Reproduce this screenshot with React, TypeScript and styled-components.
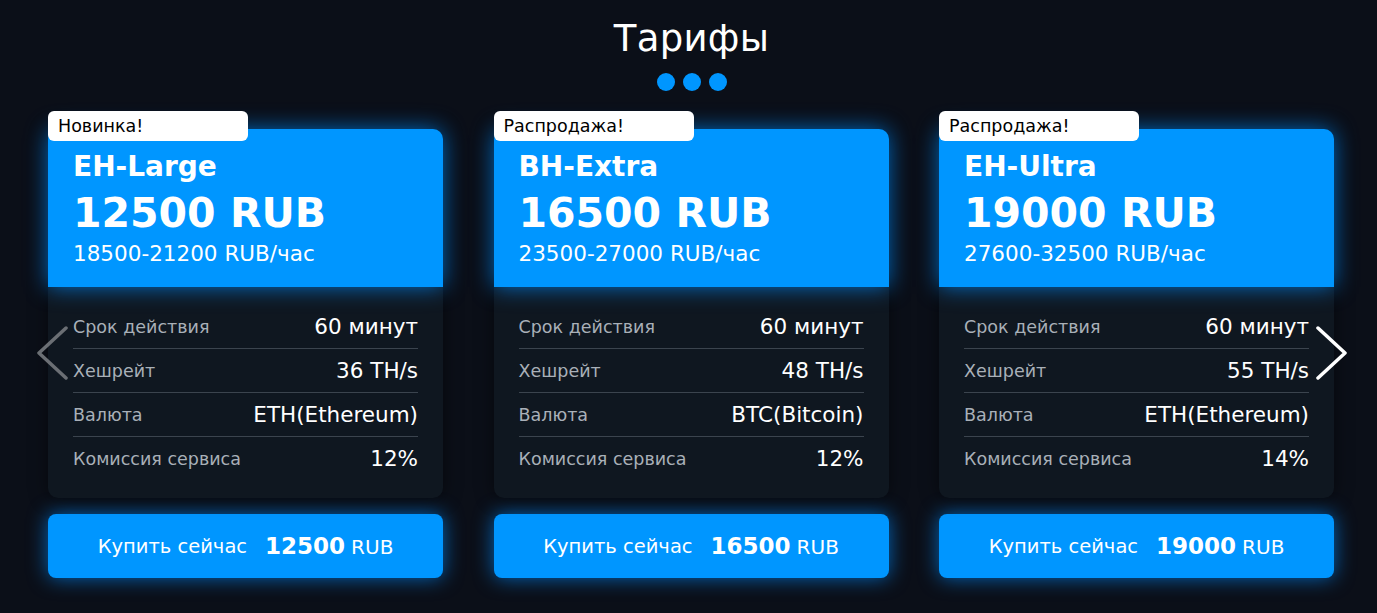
import React from "react";
import styled, { createGlobalStyle } from "styled-components";

const FONT = `"DejaVu Sans", "Noto Sans", sans-serif`;

const GlobalStyle = createGlobalStyle`
    html, body {
        margin: 0;
        padding: 0;
        background: #0b0f18;
    }
    body {
        font-family: ${FONT};
        color: #fff;
    }
`;

type Plan = {
    badge: string;
    name: string;
    price: string;
    range: string;
    hashrate: string;
    currency: string;
    fee: string;
};

const plans: Plan[] = [
    { badge: "Новинка!", name: "EH-Large", price: "12500", range: "18500-21200 RUB/час", hashrate: "36 TH/s", currency: "ETH(Ethereum)", fee: "12%" },
    { badge: "Распродажа!", name: "BH-Extra", price: "16500", range: "23500-27000 RUB/час", hashrate: "48 TH/s", currency: "BTC(Bitcoin)", fee: "12%" },
    { badge: "Распродажа!", name: "EH-Ultra", price: "19000", range: "27600-32500 RUB/час", hashrate: "55 TH/s", currency: "ETH(Ethereum)", fee: "14%" },
];

const Page = styled.div`
    width: 1377px;
    height: 613px;
    background: #0b0f18;
    display: flex;
    flex-direction: column;
    align-items: center;
    overflow: hidden;
`;

const Title = styled.h2`
    margin: 16px 0 0 6px;
    font-size: 37px;
    font-weight: 500;
    line-height: 46px;
    letter-spacing: 0.3px;
`;

const Dots = styled.div`
    display: flex;
    gap: 8px;
    margin: 11px 0 0 6px;
`;

const Dot = styled.span`
    width: 18px;
    height: 18px;
    border-radius: 50%;
    background: #0096ff;
`;

const Slider = styled.div`
    position: relative;
    width: 100%;
    margin-top: 38px;
`;

const Track = styled.div`
    display: flex;
    gap: 50.5px;
    padding-left: 48px;
`;

const Column = styled.div`
    width: 395px;
    display: flex;
    flex-direction: column;
    gap: 16px;
`;

const Card = styled.div`
    position: relative;
    border-radius: 10px;
    background: #0f1720;
    box-shadow: 0 0 18px rgba(0, 0, 0, 0.5);
`;

const Badge = styled.div`
    position: absolute;
    top: -18px;
    left: 0;
    width: 200px;
    height: 30px;
    box-sizing: border-box;
    padding: 4px 0 0 10px;
    background: #fff;
    border-radius: 6px;
    color: #000;
    font-size: 17.5px;
    font-weight: 500;
    line-height: 22px;
`;

const Head = styled.div`
    background: #0096ff;
    border-radius: 10px 10px 0 0;
    height: 158px;
    box-sizing: border-box;
    padding: 20px 25px 0;
    box-shadow: 0 0 22px rgba(0, 140, 255, 0.75);
`;

const Name = styled.div`
    font-size: 28px;
    font-weight: 700;
    line-height: 35px;
`;

const Price = styled.div`
    margin-top: 4px;
    font-size: 41px;
    font-weight: 700;
    line-height: 50px;
`;

const Range = styled.div`
    margin-top: 3px;
    font-size: 21.5px;
    font-weight: 400;
    line-height: 26px;
`;

const Body = styled.div`
    padding: 18px 25px 18px;
    border-radius: 0 0 10px 10px;
`;

const Row = styled.div`
    display: flex;
    justify-content: space-between;
    align-items: center;
    height: 43px;
    & + & {
        border-top: 1px solid #3b444e;
    }
`;

const Label = styled.span`
    color: #a9b0b8;
    font-size: 17.5px;
`;

const Value = styled.span`
    color: #fff;
    font-size: 21.5px;
`;

const BuyButton = styled.button`
    height: 64px;
    border: none;
    border-radius: 8px;
    background: #0096ff;
    color: #fff;
    font-family: ${FONT};
    display: flex;
    align-items: center;
    justify-content: center;
    gap: 18px;
    cursor: pointer;
    box-shadow: 0 0 20px rgba(0, 140, 255, 0.7);
`;

const BuyText = styled.span`
    font-size: 19.5px;
    font-weight: 500;
`;

const BuyPrice = styled.span`
    font-size: 20px;
    font-weight: 500;
    b {
        font-size: 23px;
        font-weight: 700;
        margin-right: 6px;
    }
`;

const Arrow = styled.button<{ $side: "left" | "right"; $active?: boolean }>`
    position: absolute;
    top: 196px;
    ${p => (p.$side === "left" ? "left: 36px;" : "left: 1316px;")}
    width: 32px;
    height: 56px;
    padding: 0;
    border: none;
    background: transparent;
    cursor: pointer;
    color: ${p => (p.$active ? "#ffffff" : "#6b6f74")};
`;

const Chevron = ({ dir }: { dir: "left" | "right" }) => (
    <svg width="32" height="56" viewBox="0 0 32 56" fill="none">
        <path
            d={dir === "left" ? "M30 3 L3 28 L30 53" : "M2 3 L29 28 L2 53"}
            stroke="currentColor"
            strokeWidth="3.5"
            strokeLinecap="round"
            strokeLinejoin="round"
        />
    </svg>
);

const PlanCard = ({ plan }: { plan: Plan }) => (
    <Column>
        <Card>
            <Badge>{plan.badge}</Badge>
            <Head>
                <Name>{plan.name}</Name>
                <Price>{plan.price} RUB</Price>
                <Range>{plan.range}</Range>
            </Head>
            <Body>
                <Row>
                    <Label>Срок действия</Label>
                    <Value>60 минут</Value>
                </Row>
                <Row>
                    <Label>Хешрейт</Label>
                    <Value>{plan.hashrate}</Value>
                </Row>
                <Row>
                    <Label>Валюта</Label>
                    <Value>{plan.currency}</Value>
                </Row>
                <Row>
                    <Label>Комиссия сервиса</Label>
                    <Value>{plan.fee}</Value>
                </Row>
            </Body>
        </Card>
        <BuyButton>
            <BuyText>Купить сейчас</BuyText>
            <BuyPrice>
                <b>{plan.price}</b>RUB
            </BuyPrice>
        </BuyButton>
    </Column>
);

export default function App() {
    return (
        <Page>
            <GlobalStyle />
            <Title>Тарифы</Title>
            <Dots>
                <Dot />
                <Dot />
                <Dot />
            </Dots>
            <Slider>
                <Track>
                    {plans.map(plan => (
                        <PlanCard key={plan.name} plan={plan} />
                    ))}
                </Track>
                <Arrow $side="left" aria-label="prev">
                    <Chevron dir="left" />
                </Arrow>
                <Arrow $side="right" $active aria-label="next">
                    <Chevron dir="right" />
                </Arrow>
            </Slider>
        </Page>
    );
}
